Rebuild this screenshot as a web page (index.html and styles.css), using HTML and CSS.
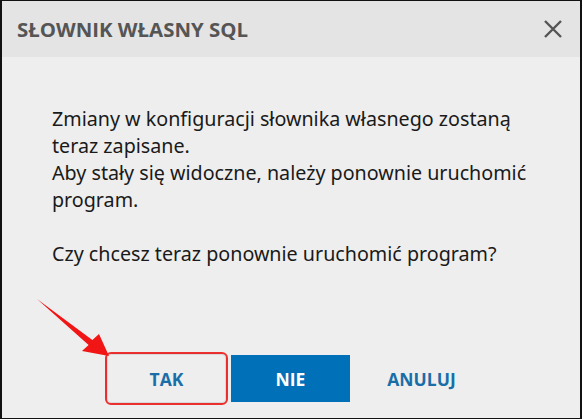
FILE: index.html
```html
<!DOCTYPE html>
<html lang="pl">
<head>
    <meta charset="UTF-8">
    <meta name="viewport" content="width=device-width, initial-scale=1.0">
    <title>Słownik własny SQL</title>
    <link rel="stylesheet" href="styles.css">
</head>
<body>
    <div class="dialog">
        <header class="dialog-head">
            <h1>SŁOWNIK WŁASNY SQL</h1>
            <button class="close" aria-label="Zamknij">
                <svg width="20" height="20" viewBox="0 0 20 20">
                    <path d="M2 2 L18 18 M18 2 L2 18" stroke="#555" stroke-width="2.4" fill="none"/>
                </svg>
            </button>
        </header>

        <div class="dialog-body">
            <p>Zmiany w konfiguracji słownika własnego zostaną<br>teraz zapisane.<br>Aby stały się widoczne, należy ponownie uruchomić<br>program.</p>
            <p>Czy chcesz teraz ponownie uruchomić program?</p>
        </div>

        <div class="dialog-foot">
            <div class="mark">
                <button class="btn">TAK</button>
            </div>
            <button class="btn primary">NIE</button>
            <button class="btn cancel">ANULUJ</button>
        </div>

        <svg class="arrow" width="80" height="70" viewBox="0 0 80 70">
            <path d="M1 1 L52.6 46.9 L46 53 L73 58 L63 36 L56.4 42.1 Z" fill="#f21515"/>
        </svg>
    </div>
</body>
</html>
```

FILE: styles.css
```css
body{
    margin: 0;
    background: #eeeeee;
}
.dialog{
    position: relative;
    width: 582px;
    height: 419px;
    box-sizing: border-box;
    border: 1px solid #111;
    border-left-width: 2px;
    border-right-width: 2px;
    background: #eeeeee;
    display: flex;
    flex-direction: column;
    font-family: "Noto Sans", "Open Sans", sans-serif;
}
.dialog-head{
    height: 56px;
    background: #e4e4e4;
    display: flex;
    align-items: center;
    justify-content: space-between;
    padding: 0 15px 0 15px;
}
h1{
    margin: 0;
    font-family: "Open Sans", sans-serif;
    font-size: 20.4px;
    font-weight: 700;
    color: #555;
}
.close{
    border: 0;
    background: none;
    padding: 0;
    width: 24px;
    height: 24px;
    display: flex;
    align-items: center;
    justify-content: center;
}
.dialog-body{
    flex: 1;
    padding: 48px 10px 0 50px;
    color: #1a1a1a;
    font-size: 19.7px;
    line-height: 27px;
}
.dialog-body p{
    margin: 0 0 27px 0;
}
.dialog-foot{
    display: flex;
    align-items: center;
    gap: 3px;
    padding: 0 0 13px 103px;
}
.mark{
    border: 2px solid #f03030;
    border-radius: 6px;
    padding: 1px;
}
.btn{
    width: 117px;
    height: 47px;
    border: 0;
    background: #eeeeee;
    color: #1a6ea8;
    font-family: "Open Sans", sans-serif;
    font-size: 17.5px;
    font-weight: 700;
}
.mark .btn{
    box-shadow: 0 0 3px rgba(0,0,0,0.25);
    border-radius: 3px;
}
.btn.primary{
    background: #0070b8;
    color: #fff;
    width: 119px;
}
.btn.cancel{
    margin-left: 10px;
}
.arrow{
    position: absolute;
    left: 34px;
    top: 297px;
}
```
